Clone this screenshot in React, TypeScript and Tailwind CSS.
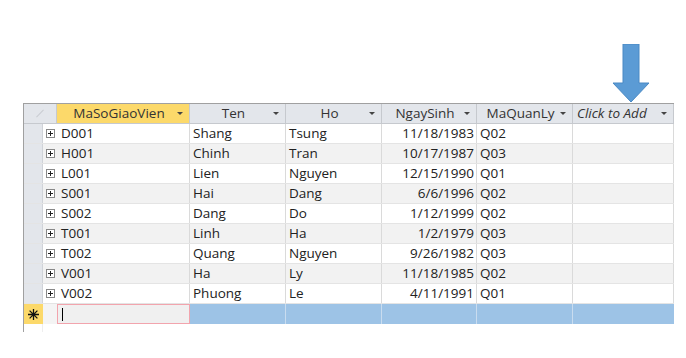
import React from 'react';

const rows = [
  ['D001', 'Shang', 'Tsung', '11/18/1983', 'Q02'],
  ['H001', 'Chinh', 'Tran', '10/17/1987', 'Q03'],
  ['L001', 'Lien', 'Nguyen', '12/15/1990', 'Q01'],
  ['S001', 'Hai', 'Dang', '6/6/1996', 'Q02'],
  ['S002', 'Dang', 'Do', '1/12/1999', 'Q02'],
  ['T001', 'Linh', 'Ha', '1/2/1979', 'Q03'],
  ['T002', 'Quang', 'Nguyen', '9/26/1982', 'Q03'],
  ['V001', 'Ha', 'Ly', '11/18/1985', 'Q02'],
  ['V002', 'Phuong', 'Le', '4/11/1991', 'Q01'],
];

function Caret() {
  return <span className="block w-0 h-0 border-l-[3px] border-r-[3px] border-t-[3px] border-l-transparent border-r-transparent border-t-[#444]" />;
}

function Head({ label, w, selected, italic, left }: { label: string; w: string; selected?: boolean; italic?: boolean; left?: boolean }) {
  return (
    <div className={`${w} h-full flex items-center border-r border-[#c6c9ce] ${selected ? 'bg-[#fcd96a]' : 'bg-[#e3e6eb]'}`}>
      <span className={`flex-1 ${left ? 'text-left pl-[4px]' : 'text-center pl-[4px]'} ${italic ? 'italic' : ''} text-[#333]`}>{label}</span>
      <span className="pr-[6px]"><Caret /></span>
    </div>
  );
}

export default function App() {
  return (
    <div className="w-[686px] h-[358px] bg-white relative" style={{ fontFamily: '"Open Sans", "Noto Sans", sans-serif' }}>
      {/* arrow */}
      <svg className="absolute left-[612px] top-[44px]" width="38" height="60" viewBox="0 0 38 60">
        <path d="M11 0 H27 V39 H37 L19 58 L1 39 H11 Z" fill="#5b9bd5" stroke="#4a89c4" strokeWidth="1" />
      </svg>

      <div className="absolute left-[23px] top-[103px] text-[13.5px] leading-none text-[#222]">
        <div className="w-[651px] border-t border-[#a0a0a0] border-l border-l-[#a0a0a0]">
          {/* header */}
          <div className="flex h-[20px] border-b border-[#c6c9ce]">
            <div className="w-[33px] h-full bg-[#e3e6eb] border-r border-[#c6c9ce] flex items-center justify-center">
              <span className="block w-[10px] h-[1px] bg-[#c9ccd1] -rotate-45" />
            </div>
            <Head label="MaSoGiaoVien" w="w-[133px]" selected />
            <Head label="Ten" w="w-[96px]" />
            <Head label="Ho" w="w-[96px]" />
            <Head label="NgaySinh" w="w-[95px]" />
            <Head label="MaQuanLy" w="w-[96px]" />
            <Head label="Click to Add" w="w-[101px]" italic left />
          </div>
          {rows.map((r, i) => (
            <div key={r[0]} className={`flex h-[20px] border-b border-[#e4e4e4] ${i % 2 === 1 ? 'bg-[#f2f2f2]' : 'bg-white'}`}>
              <div className="w-[19px] h-full bg-[#e3e6eb] border-r border-[#d0d3d8]" />
              <div className="w-[14px] h-full flex items-center justify-center">
                <span className="w-[9px] h-[9px] border border-[#888] bg-white flex items-center justify-center">
                  <svg width="5" height="5" viewBox="0 0 5 5"><path d="M0 2.5 H5 M2.5 0 V5" stroke="#222" strokeWidth="1" /></svg>
                </span>
              </div>
              <div className="w-[133px] h-full flex items-center pl-[4px] border-r border-[#dadada]">{r[0]}</div>
              <div className="w-[96px] h-full flex items-center pl-[3px] border-r border-[#dadada]">{r[1]}</div>
              <div className="w-[96px] h-full flex items-center pl-[3px] border-r border-[#dadada]">{r[2]}</div>
              <div className="w-[95px] h-full flex items-center justify-end pr-[2px] border-r border-[#dadada]">{r[3]}</div>
              <div className="w-[96px] h-full flex items-center pl-[3px] border-r border-[#dadada]">{r[4]}</div>
              <div className="w-[101px] h-full border-r border-[#dadada]" />
            </div>
          ))}
          {/* new row */}
          <div className="flex h-[20px]">
            <div className="w-[19px] h-full bg-[#fcd96a] flex items-center justify-center">
              <svg width="11" height="11" viewBox="0 0 11 11">
                <path d="M5.5 0 V11 M0 5.5 H11 M1.6 1.6 L9.4 9.4 M9.4 1.6 L1.6 9.4" stroke="#111" strokeWidth="1.3" />
              </svg>
            </div>
            <div className="w-[14px] h-full bg-[#f4f4f4]" />
            <div className="w-[133px] h-full bg-[#f0f0f0] border border-[#f2a4ad] flex items-center pl-[4px]">
              <span className="block w-[1px] h-[13px] bg-black" />
            </div>
            <div className="w-[96px] h-full bg-[#9dc3e6] border-r border-[#c9dcef]" />
            <div className="w-[96px] h-full bg-[#9dc3e6] border-r border-[#c9dcef]" />
            <div className="w-[95px] h-full bg-[#9dc3e6] border-r border-[#c9dcef]" />
            <div className="w-[96px] h-full bg-[#9dc3e6] border-r border-[#c9dcef]" />
            <div className="w-[101px] h-full bg-[#9dc3e6]" />
          </div>
          <div className="flex h-[8px]">
            <div className="w-[19px] h-full border-r border-[#eeeeee]" />
          </div>
        </div>
      </div>
    </div>
  );
}
